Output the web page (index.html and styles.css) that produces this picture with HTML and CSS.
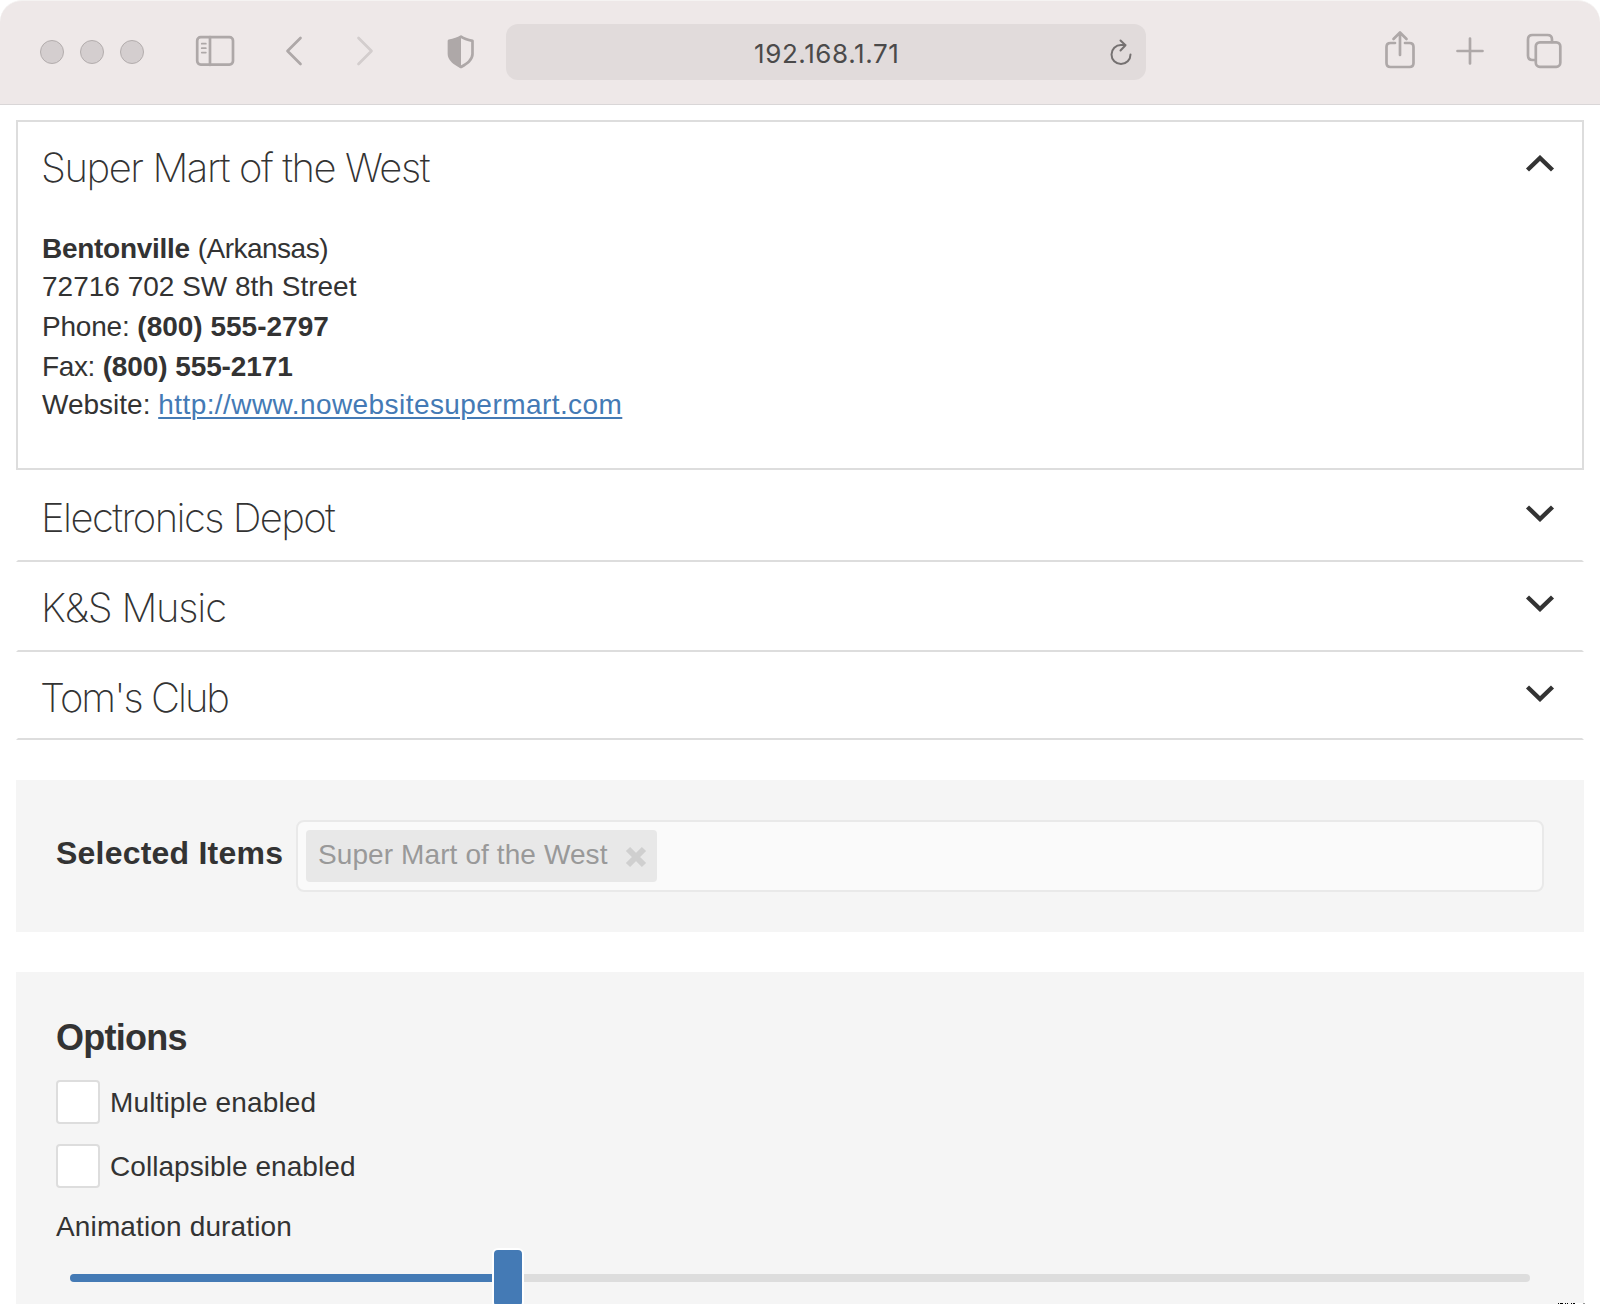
FILE: index.html
```html
<!DOCTYPE html>
<html lang="en">
<head>
<meta charset="utf-8">
<title>Accordion</title>
<link rel="stylesheet" href="styles.css">
</head>
<body>
<header class="toolbar">
  <div class="lights"><i></i><i></i><i></i></div>
  <svg class="ico sidebar" width="40" height="32" viewBox="0 0 40 32"><rect x="2.2" y="2.2" width="35.8" height="27.4" rx="3.5"/><path d="M15 2v28"/><path class="thin" d="M6.800 8.700h4M6.800 13.200h4M6.800 17.600h4"/></svg>
  <svg class="ico back" width="18" height="30" viewBox="0 0 18 30"><path d="M15.500 2 2.500 15l13 13"/></svg>
  <svg class="ico forward" width="18" height="30" viewBox="0 0 18 30"><path d="m2.500 2 13 13-13 13"/></svg>
  <svg class="ico shield" width="30" height="36" viewBox="0 0 30 36"><path d="M15 2.600C11 5 7 6 3 6.900V20c0 6 6 9.500 12 13 6-3.500 11.500-7 11.500-13V6.900C22.500 6 18.500 5 15 2.600z"/><path class="solid" d="M15 2.600C11 5 7 6 3 6.900V20c0 6 6 9.500 12 13z"/></svg>
  <div class="address">
    <span class="url">192.168.1.71</span>
    <svg class="reload" width="24" height="30" viewBox="0 0 24 30"><path d="M21.500 16.500a9.500 9.500 0 1 1-9.500-9.500h4.500M11.500 2.500l5 4.800-5 5.200"/></svg>
  </div>
  <svg class="ico share" width="32" height="40" viewBox="0 0 32 40"><path d="M11 13H6.500Q2.500 13 2.500 17v16q0 4 4 4h19q4 0 4-4V17q0-4-4-4H21"/><path d="M16 25V3M9.500 9 16 2.500 22.500 9"/></svg>
  <svg class="ico plus" width="28" height="28" viewBox="0 0 28 28"><path d="M14 1.500v25M1.500 14h25"/></svg>
  <svg class="ico tabs" width="36" height="36" viewBox="0 0 36 36"><path d="M9 27H6.500Q2 27 2 22.500v-16Q2 2 6.500 2h15Q26 2 26 6.500V9"/><rect x="9.800" y="9.300" width="24.500" height="24.500" rx="4"/></svg>
</header>
<main>
  <section class="accordion">
    <article class="item open">
      <div class="head"><h2 class="t1">Super Mart of the West</h2><svg class="chev" width="30" height="18" viewBox="0 0 30 18"><path d="M2.500 15 15 3l12.500 12"/></svg></div>
      <div class="details">
        <p class="short"><b class="city">Bentonville</b> <span class="state">(Arkansas)</span></p>
        <p>72716 702 SW 8th Street</p>
        <p><span class="phone">Phone:</span> <b>(800) 555-2797</b></p>
        <p class="short"><span class="fax">Fax:</span> <b class="faxno">(800) 555-2171</b></p>
        <p>Website: <a>http://www.nowebsitesupermart.com</a></p>
      </div>
    </article>
    <article class="item first"><div class="head"><h2 class="t2">Electronics Depot</h2><svg class="chev" width="30" height="18" viewBox="0 0 30 18"><path d="m2.500 3 12.500 12L27.500 3"/></svg></div></article>
    <article class="item"><div class="head"><h2 class="t3">K&amp;S Music</h2><svg class="chev" width="30" height="18" viewBox="0 0 30 18"><path d="m2.500 3 12.500 12L27.500 3"/></svg></div></article>
    <article class="item last"><div class="head"><h2 class="t4">Tom's Club</h2><svg class="chev" width="30" height="18" viewBox="0 0 30 18"><path d="m2.500 3 12.500 12L27.500 3"/></svg></div></article>
  </section>
  <section class="panel selected">
    <span class="caption">Selected Items</span>
    <div class="field"><div class="tag"><span>Super Mart of the West</span><svg width="22" height="22" viewBox="0 0 22 22"><path d="m3 3 16 16M19 3 3 19"/></svg></div></div>
  </section>
  <section class="panel options">
    <h3>Options</h3>
    <label class="check"><i class="box"></i><span class="multiple">Multiple enabled</span></label>
    <label class="check"><i class="box"></i><span class="collapsible">Collapsible enabled</span></label>
    <div class="label">Animation duration</div>
    <div class="slider"><div class="range"></div><div class="thumb"></div></div>
  </section>
</main>
<svg class="corner" width="27" height="1" viewBox="0 0 27 1" shape-rendering="crispEdges"><path fill="#fff" d="M17 0h8v1h-8z"/><path d="M0 0h1v1H0zM2 0h3v1H2zM7 0h1v1H7zM9 0h1v1H9zM13 0h1v1h-1zM15 0h2v1h-2z"/><path fill="#999" d="M25 0h2v1h-2z"/></svg>
</body>
</html>
```
FILE: styles.css
```css
* { box-sizing: border-box; margin: 0; padding: 0; }
html, body { height: 1304px; overflow: hidden; }
body { position: relative; background: #fff; color: #333; font: 28px/40px "Liberation Sans", Arial, sans-serif; }

.toolbar { height: 105px; margin-bottom: 1px; display: flex; align-items: flex-start; background: #eee8e8; border-top: 1px solid #f5f3f2; border-bottom: 1px solid #d9d6d7; border-radius: 22px 22px 0 0; }
.lights { display: flex; gap: 16px; margin: 39px 0 0 40px; }
.lights i { width: 24px; height: 24px; border-radius: 50%; background: #d4cecf; border: 1px solid #b3adad; }
svg { display: block; flex: none; }
.ico { fill: none; stroke: #aea8a8; stroke-width: 2.7; stroke-linecap: round; stroke-linejoin: round; }
.ico .thin { stroke-width: 1.8; }
.ico .solid { fill: #aea8a8; stroke: none; }
.sidebar { margin: 34px 0 0 51px; }
.back { margin: 35px 0 0 50px; }
.forward { margin: 35px 0 0 53px; }
.ico.forward { stroke: #d3cdcd; }
.shield { margin: 33px 0 0 72px; }
.address { display: flex; width: 640px; height: 56px; margin: 23px 0 0 30px; background: #e1dbdb; border-radius: 12px; }
.url { margin: 10px 0 0 248px; width: 348px; font: 400 26px/40px Inter, sans-serif; color: #4b4a4a; letter-spacing: 0.6px; }
.reload { margin-top: 14px; margin-left: 7px; fill: none; stroke: #757171; stroke-width: 2; stroke-linecap: round; stroke-linejoin: round; }
.share { margin: 29px 0 0 238px; }
.plus { margin: 36px 0 0 40px; }
.tabs { margin: 32px 0 0 42px; }

main { padding: 14px 16px 0; }
.item { border: 2px solid transparent; border-bottom-color: #ddd; height: 90px; }
.item.open { height: 350px; border-color: #ddd; }
.item.first { height: 92px; padding-top: 2px; }
.item.last { height: 88px; }
.head { display: flex; justify-content: space-between; padding: 18px 27px 0 23px; }
.item:not(.open) .head { padding-top: 16px; }
h2 { font: 200 40px/56px Inter, sans-serif; white-space: nowrap; }
.t1 { letter-spacing: -1.43px; }
.t2 { letter-spacing: -1.57px; }
.t3 { letter-spacing: -1.2px; }
.t4 { letter-spacing: -2px; margin-left: -1px; }
.chev { margin-top: 14px; fill: none; stroke: #333; stroke-width: 4.4; }
.open .chev { margin-top: 15px; }
.details { padding: 33px 24px 0; }
.details p { height: 40px; white-space: nowrap; }
.details .short { height: 38px; }
.details .short:first-child { height: 38px; }
.city { letter-spacing: -0.28px; }
.state { letter-spacing: -0.5px; }
.phone { letter-spacing: -0.2px; }
.fax { letter-spacing: -0.4px; }
.faxno { letter-spacing: -0.1px; }
a { color: #447ab5; letter-spacing: 0.435px; text-decoration: underline; text-decoration-thickness: 2px; text-underline-offset: 3px; }

.panel { background: #f5f5f5; padding: 40px; }
.selected { display: flex; height: 152px; margin-top: 40px; }
.caption { font-weight: 700; font-size: 32px; line-height: 40px; letter-spacing: 0.22px; margin-top: 13px; width: 240px; white-space: nowrap; }
.field { flex: 1; height: 72px; padding: 8px; background: #fafafa; border: 2px solid #e9e9e9; border-radius: 8px; }
.tag { width: 351px; height: 52px; display: flex; background: #e8e8e8; border-radius: 4px; padding-left: 12px; }
.tag span { width: 307px; margin-top: 5px; color: #999; letter-spacing: 0.1px; white-space: nowrap; }
.tag svg { margin-top: 16px; stroke: #cfcfcf; stroke-width: 6; }

.options { height: 332px; margin-top: 40px; }
h3 { font-size: 36px; line-height: 44px; height: 68px; padding-top: 4px; letter-spacing: -0.75px; }
.check { display: flex; height: 44px; margin-bottom: 20px; gap: 10px; line-height: 46px; }
.box { width: 44px; height: 44px; background: #fff; border: 2px solid #ddd; border-radius: 4px; }
.multiple { letter-spacing: 0.15px; }
.collapsible { letter-spacing: 0.06px; }
.label { margin-top: -1px; letter-spacing: 0.14px; }
.slider { position: relative; margin: 27px 14px 0; height: 8px; border-radius: 4px; background: #ddd; }
.range { width: 424px; height: 8px; border-radius: 4px 0 0 4px; background: #447ab5; }
.thumb { position: absolute; left: 422px; top: -26px; width: 32px; height: 60px; background: #447ab5; border: 2px solid #fff; border-radius: 6px; }
.corner { position: absolute; left: 1558px; top: 1303px; }
```
